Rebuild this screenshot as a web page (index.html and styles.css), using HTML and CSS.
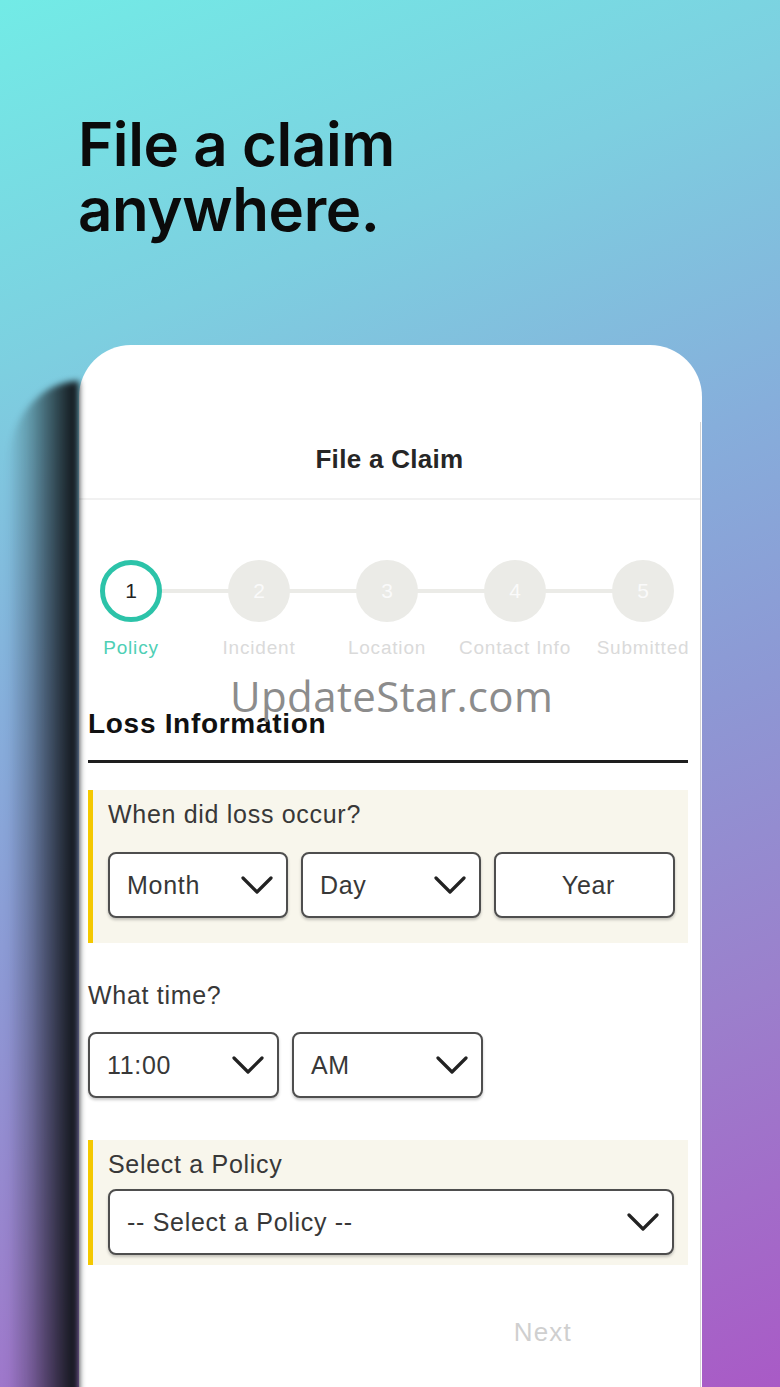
FILE: index.html
```html
<!DOCTYPE html>
<html lang="en">
<head>
<meta charset="utf-8">
<title>File a claim anywhere</title>
<link rel="stylesheet" href="styles.css">
</head>
<body>
<div class="page">
  <h1 class="headline">File a claim<br>anywhere.</h1>

  <div class="phone">
    <div class="screen">
      <header class="appbar"><h2 class="appbar-title">File a Claim</h2></header>

      <div class="stepper-wrap">
        <ol class="stepper">
          <li class="step active"><span class="dot">1</span><span class="step-label">Policy</span></li>
          <li class="step"><span class="dot">2</span><span class="step-label">Incident</span></li>
          <li class="step"><span class="dot">3</span><span class="step-label">Location</span></li>
          <li class="step"><span class="dot">4</span><span class="step-label">Contact Info</span></li>
          <li class="step"><span class="dot">5</span><span class="step-label">Submitted</span></li>
        </ol>
      </div>

      <section class="form">
        <h3 class="form-title">Loss Information</h3>

        <div class="field-group date-group">
          <div class="field-label">When did loss occur?</div>
          <div class="row row-three">
            <div class="select"><span>Month</span><svg class="chev" viewBox="0 0 32 18"><path d="M2 2 L16 16 L30 2"/></svg></div>
            <div class="select"><span>Day</span><svg class="chev" viewBox="0 0 32 18"><path d="M2 2 L16 16 L30 2"/></svg></div>
            <div class="select select-center"><span>Year</span></div>
          </div>
        </div>

        <div class="plain-label">What time?</div>
        <div class="row row-two">
          <div class="select"><span>11:00</span><svg class="chev" viewBox="0 0 32 18"><path d="M2 2 L16 16 L30 2"/></svg></div>
          <div class="select"><span>AM</span><svg class="chev" viewBox="0 0 32 18"><path d="M2 2 L16 16 L30 2"/></svg></div>
        </div>

        <div class="field-group policy-group">
          <div class="field-label">Select a Policy</div>
          <div class="select select-wide"><span>-- Select a Policy --</span><svg class="chev" viewBox="0 0 32 18"><path d="M2 2 L16 16 L30 2"/></svg></div>
        </div>

        <div class="actions"><span class="next">Next</span></div>
      </section>
    </div>
  </div>

  <div class="watermark">UpdateStar.com</div>
</div>
</body>
</html>
```

FILE: styles.css
```css
* { box-sizing: border-box; }

html, body {
  margin: 0;
  padding: 0;
}

body {
  width: 780px;
  height: 1387px;
  overflow: hidden;
  font-family: "Liberation Sans", Arial, sans-serif;
}

.page {
  position: relative;
  width: 780px;
  height: 1387px;
  overflow: hidden;
  padding-top: 112px;
  background: linear-gradient(158deg, #72ebe6 0%, #7dcfe0 22%, #86aedb 42%, #8d98d4 58%, #9b80cc 76%, #a95ac6 100%);
}

.headline {
  margin: 0 0 0 78px;
  font-family: Inter, Lato, sans-serif;
  font-weight: 600;
  font-size: 60px;
  line-height: 65px;
  color: #0b0b0b;
  letter-spacing: -0.4px;
}

.phone {
  position: relative;
  margin: 103px 0 0 79px;
  width: 623px;
  height: 1050px;
  background: #fff;
  border-radius: 52px 52px 0 0;
  padding-top: 77px;
}

.phone::before {
  content: "";
  position: absolute;
  left: -72px;
  width: 72px;
  top: 36px;
  bottom: 0;
  border-top-left-radius: 72px 90px;
  background: linear-gradient(to right,
    rgba(16, 20, 24, 0) 0%,
    rgba(16, 20, 24, 0.25) 30%,
    rgba(16, 20, 24, 0.6) 60%,
    rgba(16, 20, 24, 0.92) 88%,
    rgba(16, 20, 24, 0.97) 100%);
  filter: blur(3px);
}

.screen {
  height: 100%;
  border-right: 1px solid #d4d4d4;
  margin-right: 1px;
}

.appbar {
  height: 78px;
  display: flex;
  align-items: center;
  justify-content: center;
  border-bottom: 2px solid #f1f1f1;
}

.appbar-title {
  margin: 0;
  font-size: 26px;
  font-weight: 700;
  color: #262626;
  letter-spacing: 0.3px;
  padding-bottom: 2px;
}

.stepper-wrap {
  margin: 60px 0 0 9px;
  width: 602px;
  overflow: hidden;
}

.stepper {
  list-style: none;
  margin: 0 0 0 -21px;
  padding: 0;
  display: grid;
  grid-template-columns: repeat(5, 128px);
  width: 640px;
}

.step {
  position: relative;
  display: flex;
  flex-direction: column;
  align-items: center;
}

.step + .step::before {
  content: "";
  position: absolute;
  top: 29px;
  left: -64px;
  width: 128px;
  height: 4px;
  background: #ebebe7;
}

.dot {
  position: relative;
  z-index: 1;
  width: 62px;
  height: 62px;
  border-radius: 50%;
  background: #ebebe7;
  color: #fafafa;
  display: flex;
  align-items: center;
  justify-content: center;
  font-size: 21px;
}

.step.active .dot {
  background: #fff;
  border: 5px solid #2cc3a9;
  color: #222;
}

.step-label {
  margin-top: 14px;
  font-size: 19px;
  line-height: 24px;
  letter-spacing: 0.8px;
  color: #dadada;
  white-space: nowrap;
}

.step.active .step-label {
  color: #4ecfb5;
}

.form {
  padding: 0 12px 0 9px;
}

.form-title {
  margin: 48px 0 0;
  padding-bottom: 20px;
  font-size: 28px;
  line-height: 32px;
  font-weight: 700;
  letter-spacing: 0.7px;
  color: #111;
  border-bottom: 3px solid #1e1e1e;
}

.field-group {
  background: #f8f6ec;
  border-left: 5px solid #f4c800;
  padding: 10px 14px 25px 15px;
}

.date-group {
  margin-top: 27px;
}

.policy-group {
  margin-top: 42px;
  padding-bottom: 10px;
}

.field-label,
.plain-label {
  font-size: 25px;
  line-height: 28px;
  letter-spacing: 0.7px;
  color: #383838;
}

.plain-label {
  margin-top: 38px;
}

.row {
  display: grid;
  gap: 13px;
}

.row-three {
  margin-top: 24px;
  grid-template-columns: 180px 180px 181px;
}

.row-two {
  margin-top: 23px;
  grid-template-columns: 191px 191px;
}

.select {
  height: 66px;
  border: 2px solid #4e4e4e;
  border-radius: 8px;
  background: #fff;
  display: flex;
  align-items: center;
  justify-content: space-between;
  padding: 0 13px 0 17px;
  font-size: 25px;
  letter-spacing: 0.7px;
  color: #383838;
  box-shadow: 0 2px 3px rgba(0, 0, 0, 0.22);
}

.select-center {
  justify-content: center;
  padding: 0 0 0 8px;
}

.select-wide {
  margin-top: 11px;
}

.chev {
  width: 32px;
  height: 18px;
  fill: none;
  stroke: #222;
  stroke-width: 3.2;
  stroke-linecap: round;
  stroke-linejoin: round;
}

.actions {
  margin-top: 51px;
  display: flex;
  justify-content: flex-end;
  padding-right: 116px;
}

.next {
  font-size: 26px;
  line-height: 32px;
  letter-spacing: 1.2px;
  color: #cfcfcf;
}

.watermark {
  position: absolute;
  left: 230px;
  top: 671px;
  font-family: "Open Sans", sans-serif;
  font-size: 42px;
  line-height: 50px;
  letter-spacing: 0.4px;
  color: #8c8c8c;
}
```
